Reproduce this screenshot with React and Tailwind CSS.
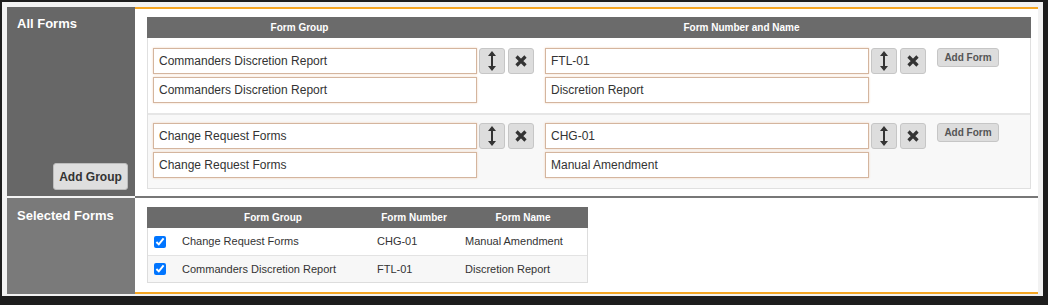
import React from "react";

const font = "font-['Liberation_Sans',Arial,sans-serif]";

function ArrowsIcon() {
  return (
    <svg width="8" height="20" viewBox="0 0 8 20">
      <path d="M4 0 L8 5 H5 V15 H8 L4 20 L0 15 H3 V5 H0 Z" fill="#333" />
    </svg>
  );
}

function CrossIcon() {
  return (
    <svg width="12" height="12" viewBox="0 0 12 12">
      <path d="M1.5 1.5 L10.5 10.5 M10.5 1.5 L1.5 10.5" stroke="#333" strokeWidth="3.2" />
    </svg>
  );
}

function Field({ value }) {
  return (
    <div className="w-[324px] h-[26px] flex items-center pl-[5px] bg-white border border-[#d4b59e] shadow-[0_0_2px_#f1d3ba] text-[12px] text-[#333]">
      {value}
    </div>
  );
}

function IconButtons() {
  return (
    <div className="flex gap-[3px] ml-[2px]">
      <div className="w-[26px] h-[26px] flex items-center justify-center bg-[#dddddd] border border-[#c6c6c6] rounded-[3px]">
        <ArrowsIcon />
      </div>
      <div className="w-[26px] h-[26px] flex items-center justify-center bg-[#dddddd] border border-[#c6c6c6] rounded-[3px]">
        <CrossIcon />
      </div>
    </div>
  );
}

function GroupRow({ group, number, name, shaded }) {
  return (
    <div
      className={
        shaded
          ? "flex pl-[5px] pt-[8px] pb-[10px] bg-[#f8f8f8] border-t-2 border-[#e6e6e6]"
          : "flex pl-[5px] pt-[10px] pb-[10px] bg-white"
      }
    >
      <div className="flex flex-col gap-[3px]">
        <Field value={group} />
        <Field value={group} />
      </div>
      <IconButtons />
      <div className="flex flex-col gap-[3px] ml-[11px]">
        <Field value={number} />
        <Field value={name} />
      </div>
      <IconButtons />
      <div className="ml-[11px]">
        <div className="w-[62px] h-[19px] flex items-center justify-center bg-[#dddddd] border border-[#c6c6c6] rounded-[3px] text-[10px] font-bold text-[#555]">
          Add Form
        </div>
      </div>
    </div>
  );
}

const selected = [
  { group: "Change Request Forms", number: "CHG-01", name: "Manual Amendment" },
  { group: "Commanders Discretion Report", number: "FTL-01", name: "Discretion Report" },
];

export default function App() {
  return (
    <div className={`w-[1048px] h-[305px] bg-[#1d1d1d] pl-[2px] pt-[2px] pr-[5px] pb-[9px] ${font}`}>
      <div className="h-full bg-[#f2f2f2] pl-[5px] pt-[5px] pr-[5px] pb-[2px] flex flex-col">
        {/* All Forms */}
        <div className="flex h-[191px]">
          <div className="w-[128px] bg-[#676767] border-b-2 border-[#f4f4f4] flex flex-col justify-between items-end">
            <div className="self-start pl-[10px] pt-[7px] text-[13px] font-bold text-white">All Forms</div>
            <div className="mr-[7px] mb-[6px] w-[75px] h-[27px] flex items-center justify-center bg-[#dedede] border border-[#bdbdbd] rounded-[3px] text-[12px] font-bold text-[#333]">
              Add Group
            </div>
          </div>
          <div className="flex-1 bg-white border-t-2 border-b-2 border-t-[#f5a623] border-b-[#777777] pl-[12px] pr-[7px] pt-[8px]">
            <div className="flex h-[21px] bg-[#6b6b6b] text-white text-[10px] font-bold">
              <div className="w-[305px] flex items-center justify-center">Form Group</div>
              <div className="flex-1 flex items-center justify-center">Form Number and Name</div>
            </div>
            <div className="border-x border-b border-[#e0e0e0]">
              <GroupRow group="Commanders Discretion Report" number="FTL-01" name="Discretion Report" />
              <GroupRow group="Change Request Forms" number="CHG-01" name="Manual Amendment" shaded />
            </div>
          </div>
        </div>

        {/* Selected Forms */}
        <div className="flex h-[96px]">
          <div className="w-[128px] bg-[#7a7a7a] pl-[10px] pt-[8px] text-[13px] font-bold text-white">
            Selected Forms
          </div>
          <div className="flex-1 bg-white border-b-2 border-[#f5a623] pl-[12px] pt-[9px]">
            <div className="w-[441px] border-x border-b border-[#dddddd]">
              <div className="flex h-[21px] bg-[#6b6b6b] text-white text-[10px] font-bold -mx-px">
                <div className="w-[29px]" />
                <div className="w-[194px] flex items-center justify-center">Form Group</div>
                <div className="w-[88px] flex items-center justify-center">Form Number</div>
                <div className="flex-1 flex items-center justify-center">Form Name</div>
              </div>
              {selected.map((row, i) => (
                <div
                  key={row.number}
                  className={
                    i === 0
                      ? "flex h-[27px] items-center bg-white text-[11px] text-[#333]"
                      : "flex h-[27px] items-center bg-[#f7f7f7] border-t border-[#e3e3e3] text-[11px] text-[#333]"
                  }
                >
                  <div className="w-[28px] flex items-center pl-[6px]">
                    <input type="checkbox" defaultChecked className="w-[12px] h-[12px] m-0 accent-[#0075ff]" />
                  </div>
                  <div className="w-[194px] pl-[6px]">{row.group}</div>
                  <div className="w-[88px] pl-[7px]">{row.number}</div>
                  <div className="flex-1 pl-[7px]">{row.name}</div>
                </div>
              ))}
            </div>
          </div>
        </div>
      </div>
    </div>
  );
}
